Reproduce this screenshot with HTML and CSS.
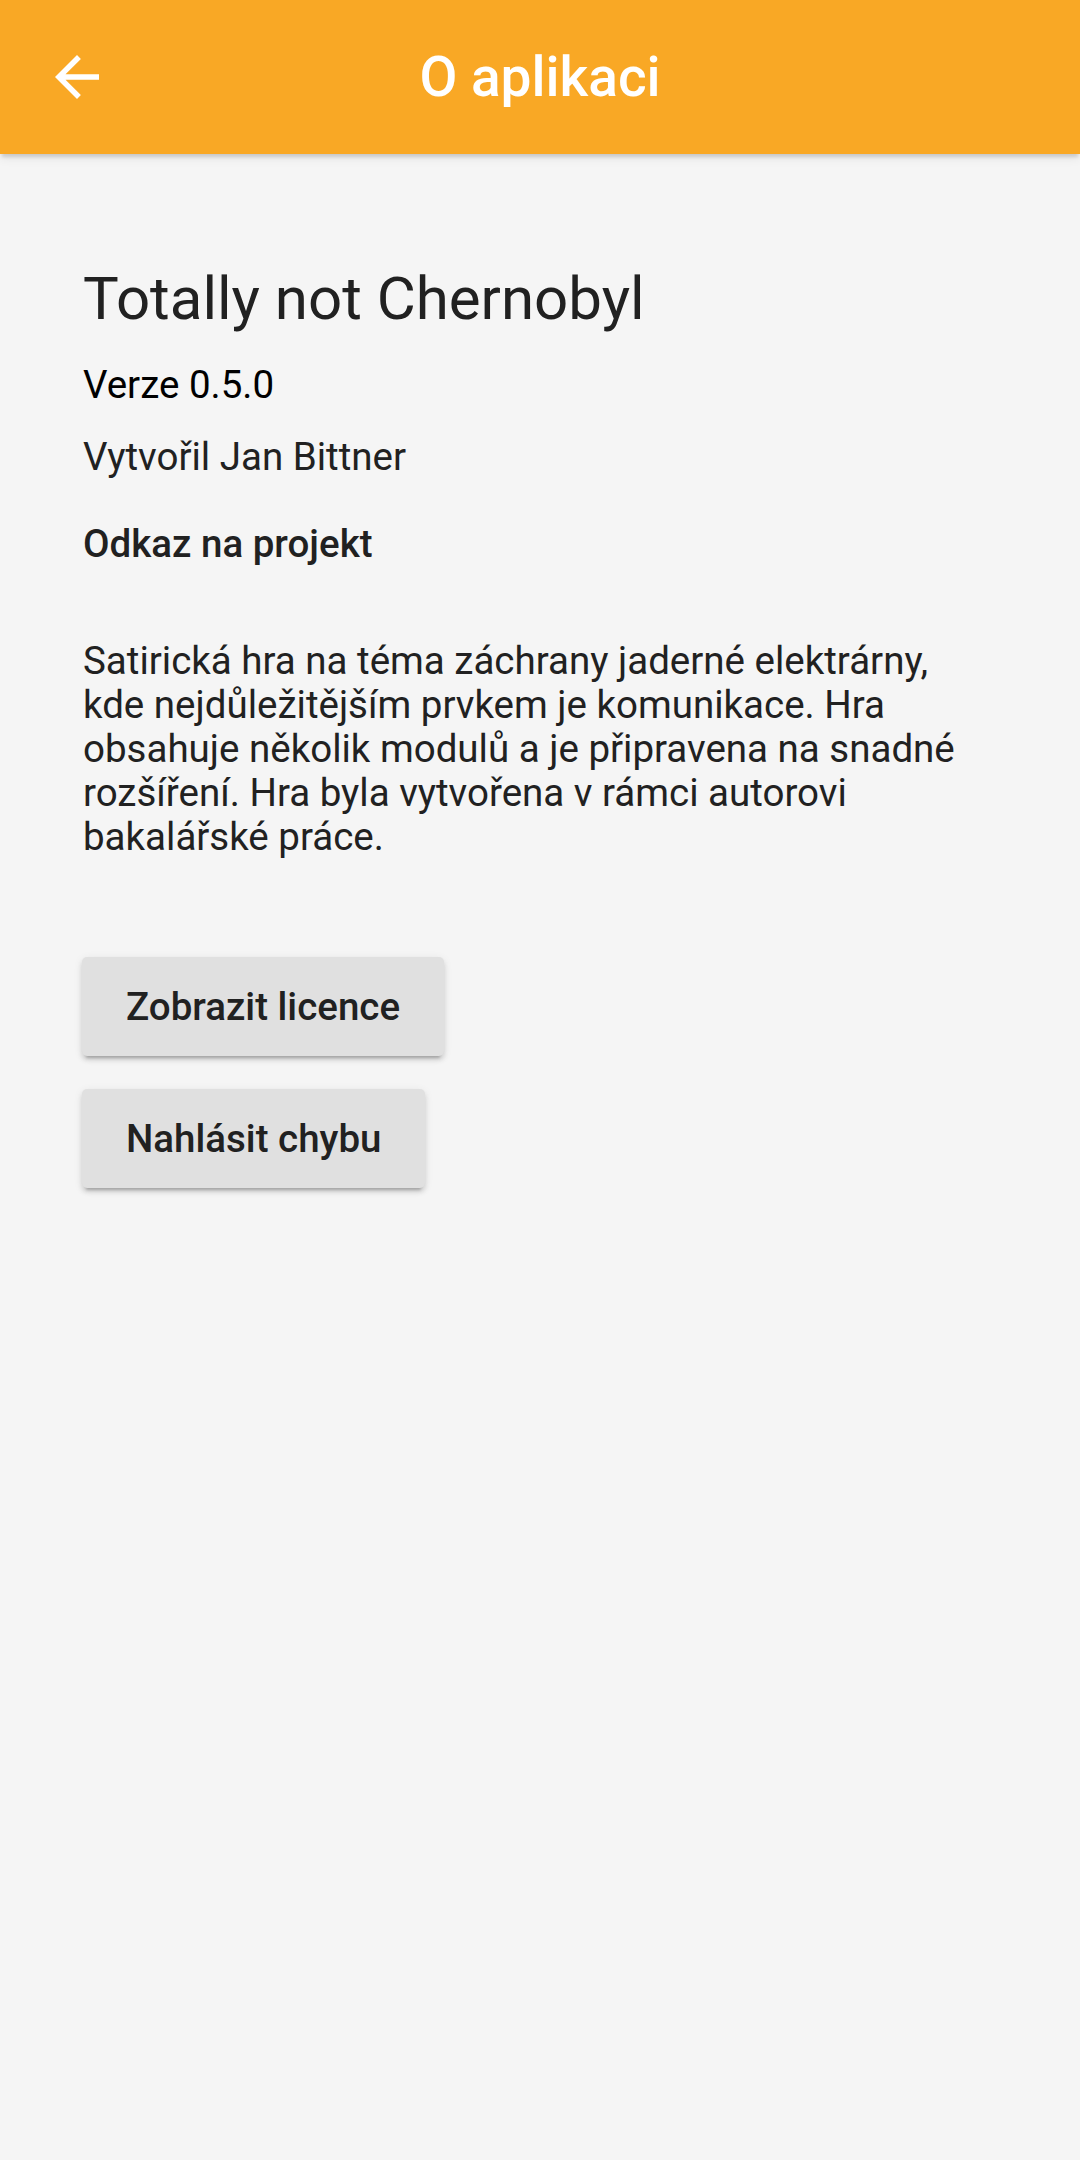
FILE: index.html
```html
<!DOCTYPE html>
<html lang="cs">
<head>
<meta charset="utf-8">
<title>O aplikaci</title>
<link rel="stylesheet" href="styles.css">
</head>
<body>
<header class="appbar">
  <button class="back" aria-label="Zpět">
    <svg viewBox="0 0 24 24" width="66" height="66"><path fill="#fff" d="M20 11H7.83l5.59-5.59L12 4l-8 8 8 8 1.41-1.41L7.83 13H20v-2z"/></svg>
  </button>
  <h1 class="appbar-title">O aplikaci</h1>
  <div class="spacer"></div>
</header>
<main class="content">
  <h2 class="app-name">Totally not Chernobyl</h2>
  <p class="version">Verze 0.5.0</p>
  <p class="author">Vytvořil Jan Bittner</p>
  <p class="link">Odkaz na projekt</p>
  <p class="desc">Satirická hra na téma záchrany jaderné elektrárny, kde nejdůležitějším prvkem je komunikace. Hra obsahuje několik modulů a je připravena na snadné rozšíření. Hra byla vytvořena v rámci autorovi bakalářské práce.</p>
  <div class="actions">
    <button class="raised">Zobrazit licence</button>
    <button class="raised">Nahlásit chybu</button>
  </div>
</main>
</body>
</html>
```
FILE: styles.css
```css
html, body {
  margin: 0;
  padding: 0;
}
body {
  background: #f5f5f5;
  font-family: Roboto, "Noto Sans", sans-serif;
  color: #212121;
  width: 1080px;
  min-height: 2160px;
}
.appbar {
  height: 154px;
  background: #f9a825;
  display: flex;
  align-items: center;
  padding: 0 44px;
  box-sizing: border-box;
  box-shadow: 0 5px 3px -2px rgba(0,0,0,.12), 0 4px 10px rgba(0,0,0,.08);
  position: relative;
  z-index: 1;
}
.back {
  width: 66px;
  height: 66px;
  padding: 0;
  border: 0;
  background: none;
  display: flex;
}
.spacer { width: 66px; }
.appbar-title {
  flex: 1;
  margin: 0;
  text-align: center;
  color: #fff;
  font-size: 55px;
  font-weight: 500;
  line-height: 66px;
}
.content {
  padding: 110px 82px 0 83px;
}
.app-name {
  margin: 0;
  font-size: 60px;
  font-weight: 400;
  line-height: 70px;
  color: #212121;
}
.version, .author, .link {
  margin: 0;
  font-size: 38.5px;
  line-height: 45px;
}
.version {
  margin-top: 28px;
  color: #000;
}
.author {
  margin-top: 27px;
}
.link {
  margin-top: 42px;
  font-weight: 500;
}
.desc {
  margin: 73px 0 0;
  font-size: 38.5px;
  line-height: 44px;
}
.actions {
  margin-top: 98px;
  display: flex;
  flex-direction: column;
  align-items: flex-start;
  gap: 33px;
}
.raised {
  height: 99px;
  margin-left: -1px;
  padding: 0 44px;
  border: 0;
  border-radius: 5px;
  background: #e0e0e0;
  color: #212121;
  font-family: Roboto, "Noto Sans", sans-serif;
  font-size: 38.5px;
  font-weight: 500;
  line-height: 45px;
  box-shadow: 0 6px 3px -4px rgba(0,0,0,.2), 0 4px 5px rgba(0,0,0,.12), 0 2px 10px rgba(0,0,0,.08);
}
```
